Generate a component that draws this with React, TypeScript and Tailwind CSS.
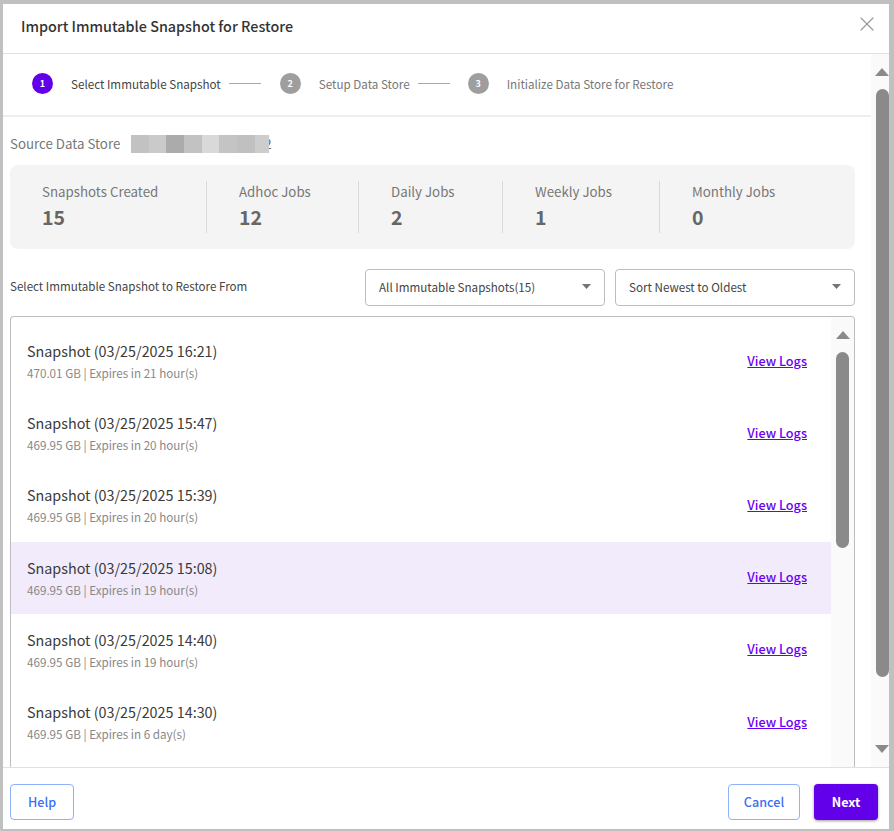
import { X } from "lucide-react";

const snapshots = [
  { name: "Snapshot (03/25/2025 16:21)", meta: "470.01 GB | Expires in 21 hour(s)" },
  { name: "Snapshot (03/25/2025 15:47)", meta: "469.95 GB | Expires in 20 hour(s)" },
  { name: "Snapshot (03/25/2025 15:39)", meta: "469.95 GB | Expires in 20 hour(s)" },
  { name: "Snapshot (03/25/2025 15:08)", meta: "469.95 GB | Expires in 19 hour(s)", active: true },
  { name: "Snapshot (03/25/2025 14:40)", meta: "469.95 GB | Expires in 19 hour(s)" },
  { name: "Snapshot (03/25/2025 14:30)", meta: "469.95 GB | Expires in 6 day(s)" },
];

const stats = [
  { label: "Snapshots Created", value: "15", width: "w-[197px]" },
  { label: "Adhoc Jobs", value: "12", width: "w-[152px]" },
  { label: "Daily Jobs", value: "2", width: "w-[144px]" },
  { label: "Weekly Jobs", value: "1", width: "w-[157px]" },
  { label: "Monthly Jobs", value: "0", width: "flex-1" },
];

const blurBlocks = [
  "w-[18px] bg-[#c2c2c2]",
  "w-[17px] bg-[#cacaca]",
  "w-[18px] bg-[#ababab]",
  "w-[18px] bg-[#c2c2c2]",
  "w-[17px] bg-[#d9d9d9]",
  "w-[18px] bg-[#c4c4c4]",
  "w-[18px] bg-[#c0c0c0]",
  "w-[14px] bg-[#cdcdcd]",
];

function Arrow({ down, className }: { down?: boolean; className?: string }) {
  return (
    <svg width="14" height="8" viewBox="0 0 14 8" className={className}>
      <path d={down ? "M0 0H14L7 8Z" : "M7 0L14 8H0Z"} fill="#8a8a8a" />
    </svg>
  );
}

function Step({ n, label, active }: { n: number; label: string; active?: boolean }) {
  return (
    <div className="flex items-center">
      <span
        className={`flex h-[21px] w-[21px] items-center justify-center rounded-full text-[9px] font-bold text-white ${
          active ? "bg-[#6200ea]" : "bg-[#9e9e9e]"
        }`}
      >
        {n}
      </span>
      <span className={`ml-[18px] text-[11.65px] ${active ? "text-[#444444]" : "text-[#777777]"}`}>{label}</span>
    </div>
  );
}

function Select({ label, width }: { label: string; width: string }) {
  return (
    <div
      className={`flex h-[37px] items-center justify-between rounded border border-[#bdbdbd] pb-[2px] pl-[13px] pr-[13px] text-[11.65px] text-[#444444] ${width}`}
    >
      {label}
      <svg width="9" height="5" viewBox="0 0 9 5">
        <path d="M0 0H9L4.5 5Z" fill="#757575" />
      </svg>
    </div>
  );
}

export default function App() {
  return (
    <div
      className="h-[831px] w-[894px] overflow-hidden bg-[#c0c0c0] pb-[2px] pl-[3px] pr-[5px] pt-[4px]"
      style={{ fontFamily: '"Noto Sans CJK JP", "Noto Sans", sans-serif' }}
    >
      <div className="flex h-full flex-col bg-white">
        {/* Title */}
        <div className="flex h-[50px] shrink-0 items-center justify-between border-b border-[#e0e0e0] pb-[5px] pl-[18px] pr-[10px]">
          <h1 className="text-[14.35px] font-medium text-[#333333]">Import Immutable Snapshot for Restore</h1>
          <X className="mb-[5px] h-6 w-6 text-[#999999]" strokeWidth={1.2} />
        </div>

        {/* Body */}
        <div className="flex min-h-0 flex-1">
          <div className="w-[868px] shrink-0 overflow-hidden">
            {/* Stepper */}
            <div className="flex h-[63px] items-center border-b-2 border-[#eeeeee] pb-[2px] pl-[29px]">
              <Step n={1} label="Select Immutable Snapshot" active />
              <span className="ml-2 mr-[19px] h-px w-8 bg-[#aaaaaa]" />
              <Step n={2} label="Setup Data Store" />
              <span className="ml-2 mr-[18px] h-px w-8 bg-[#aaaaaa]" />
              <Step n={3} label="Initialize Data Store for Restore" />
            </div>

            <div className="pl-[7px] pr-[16px]">
              {/* Source */}
              <div className="mt-[17px] flex h-[19px] items-center text-[13.3px] text-[#777777]">
                Source Data Store
                <div className="relative z-10 ml-[11px] flex h-[18px]">
                  {blurBlocks.map((b, i) => (
                    <div key={i} className={b} />
                  ))}
                </div>
                <span className="ml-[-5px] text-[#666666]">2</span>
              </div>

              {/* Stats */}
              <div className="mt-[12px] flex h-[84px] items-center rounded-lg bg-[#f4f4f4]">
                {stats.map((s, i) => (
                  <div
                    key={s.label}
                    className={`flex h-[52px] flex-col pl-8 ${s.width} ${i < 4 ? "border-r border-[#d9d9d9]" : ""}`}
                  >
                    <span className="text-[13.3px] leading-[21px] text-[#777777]">{s.label}</span>
                    <span className="mt-px text-[19.5px] font-bold leading-[28px] text-[#666666]">{s.value}</span>
                  </div>
                ))}
              </div>

              {/* Filters */}
              <div className="mt-[20px] flex items-center">
                <span className="flex-1 pb-[2px] text-[11.6px] text-[#444444]">
                  Select Immutable Snapshot to Restore From
                </span>
                <Select label="All Immutable Snapshots(15)" width="w-[240px]" />
                <Select label="Sort Newest to Oldest" width="ml-[10px] w-[240px]" />
              </div>

              {/* Snapshot list */}
              <div className="mt-[10px] flex h-[460px] overflow-hidden rounded-t border border-b-0 border-[#bdbdbd]">
                <div className="w-[820px] shrink-0 pt-[8px]">
                  {snapshots.map((s) => (
                    <div
                      key={s.name}
                      className={`flex h-[72.2px] items-center justify-between pl-4 pr-6 pt-[1px] ${
                        s.active ? "bg-[#f1ebfc]" : ""
                      }`}
                    >
                      <div>
                        <div className="text-[14.35px] leading-[22px] text-[#3a3a3a]">{s.name}</div>
                        <div className="text-[11.65px] leading-[21px] text-[#888888]">{s.meta}</div>
                      </div>
                      <a href="#" className="mb-[3px] text-[12.65px] font-medium text-[#6a00f4] underline">
                        View Logs
                      </a>
                    </div>
                  ))}
                </div>
                <div className="flex flex-1 flex-col items-center bg-[#fafafa] pt-[14px]">
                  <Arrow />
                  <div className="mt-[13px] h-[196px] w-[13px] rounded-full bg-[#8a8a8a]" />
                </div>
              </div>
            </div>
          </div>

          {/* Page scrollbar */}
          <div className="flex flex-1 flex-col items-end bg-[#fafafa] pt-[14px]">
            <Arrow />
            <div className="mt-[13px] h-[588px] w-[13px] rounded-full bg-[#8a8a8a]" />
            <Arrow down className="mt-[68px]" />
          </div>
        </div>

        {/* Footer */}
        <div className="flex h-[62px] shrink-0 items-center justify-between border-t border-[#e0e0e0] pl-[7px] pr-[11px] pt-[6px]">
          <button className="h-[36px] w-[64px] rounded border border-[#8fb0fb] bg-white pt-[2px] text-[12.6px] font-medium text-[#3d6ef5]">
            Help
          </button>
          <div className="flex gap-[14px]">
            <button className="h-[36px] w-[72px] rounded border border-[#8fb0fb] bg-white pt-[2px] text-[12.6px] font-medium text-[#3d6ef5]">
              Cancel
            </button>
            <button className="h-[36px] w-[64px] rounded bg-[#6200ea] pt-[2px] text-[12.6px] font-bold text-white shadow-[0_1px_3px_rgba(0,0,0,0.4)]">
              Next
            </button>
          </div>
        </div>
      </div>
    </div>
  );
}
